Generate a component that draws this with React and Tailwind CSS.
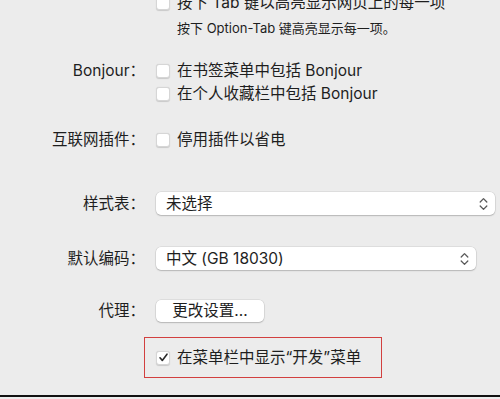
import React from "react";

const Checkbox = ({ checked = false }) => (
  <span className="w-[14px] h-[14px] shrink-0 rounded-[3px] bg-white border border-[#d6d6d6] shadow-[0_0.5px_1px_rgba(0,0,0,0.15)] flex items-center justify-center">
    {checked && (
      <svg width="11" height="11" viewBox="0 0 11 11">
        <path d="M2 5.8 L4.3 8.4 L9 2.2" fill="none" stroke="#2a2a2a" strokeWidth="1.6" strokeLinecap="round" strokeLinejoin="round" />
      </svg>
    )}
  </span>
);

const Arrows = () => (
  <svg width="9" height="14" viewBox="0 0 9 14">
    <path d="M1.2 5 L4.5 1.6 L7.8 5 M1.2 9 L4.5 12.4 L7.8 9" fill="none" stroke="#5a5a5a" strokeWidth="1.3" strokeLinecap="round" strokeLinejoin="round" />
  </svg>
);

const Row = ({ label, children, className = "" }) => (
  <div className={`grid grid-cols-[145px_1fr] gap-x-[11px] items-center ${className}`}>
    <div className="text-right whitespace-nowrap">{label}</div>
    <div className="flex items-center min-w-0">{children}</div>
  </div>
);

const CheckItem = ({ children, checked }) => (
  <div className="flex items-center gap-[7px] whitespace-nowrap">
    <Checkbox checked={checked} />
    <span>{children}</span>
  </div>
);

const Select = ({ value, width }) => (
  <div className={`${width} h-[23px] rounded-[5px] bg-white shadow-[0_0_0_0.5px_rgba(0,0,0,0.12),0_1px_1.5px_rgba(0,0,0,0.18)] flex items-center justify-between pl-[10px] pr-[7px]`}>
    <span>{value}</span>
    <Arrows />
  </div>
);

export default function App() {
  return (
    <div className="w-[500px] h-[399px] overflow-hidden bg-[#ececec] text-[#1e1e1e] text-[15.5px] leading-none font-['Inter','Noto_Sans_CJK_SC',sans-serif]">
      <Row label="" className="h-[22px] mt-[-8px]">
        <CheckItem>按下 Tab 键以高亮显示网页上的每一项</CheckItem>
      </Row>
      <Row label="" className="h-[18px] mt-[5px]">
        <span className="pl-[21px] text-[13px] whitespace-nowrap">按下 Option-Tab 键高亮显示每一项。</span>
      </Row>

      <Row label="Bonjour：" className="h-[23px] mt-[22px]">
        <CheckItem>在书签菜单中包括 Bonjour</CheckItem>
      </Row>
      <Row label="" className="h-[23px]">
        <CheckItem>在个人收藏栏中包括 Bonjour</CheckItem>
      </Row>

      <Row label="互联网插件：" className="h-[23px] mt-[23px]">
        <CheckItem>停用插件以省电</CheckItem>
      </Row>

      <Row label="样式表：" className="h-[23px] mt-[41px]">
        <Select value="未选择" width="w-[339px]" />
      </Row>

      <Row label="默认编码：" className="h-[23px] mt-[32px]">
        <Select value="中文 (GB 18030)" width="w-[320px]" />
      </Row>

      <Row label="代理：" className="h-[22px] mt-[30px]">
        <div className="w-[108px] h-[22px] rounded-[5px] bg-white shadow-[0_0_0_0.5px_rgba(0,0,0,0.12),0_1px_1.5px_rgba(0,0,0,0.18)] flex items-center justify-center">
          更改设置...
        </div>
      </Row>

      <div className="mt-[15px] ml-[144px] w-[238px] h-[41px] border border-[#d2403f] flex items-center pl-[11px]">
        <CheckItem checked>在菜单栏中显示“开发”菜单</CheckItem>
      </div>

      <div className="mt-[17px] h-[1.5px] bg-[#111]" />
    </div>
  );
}
